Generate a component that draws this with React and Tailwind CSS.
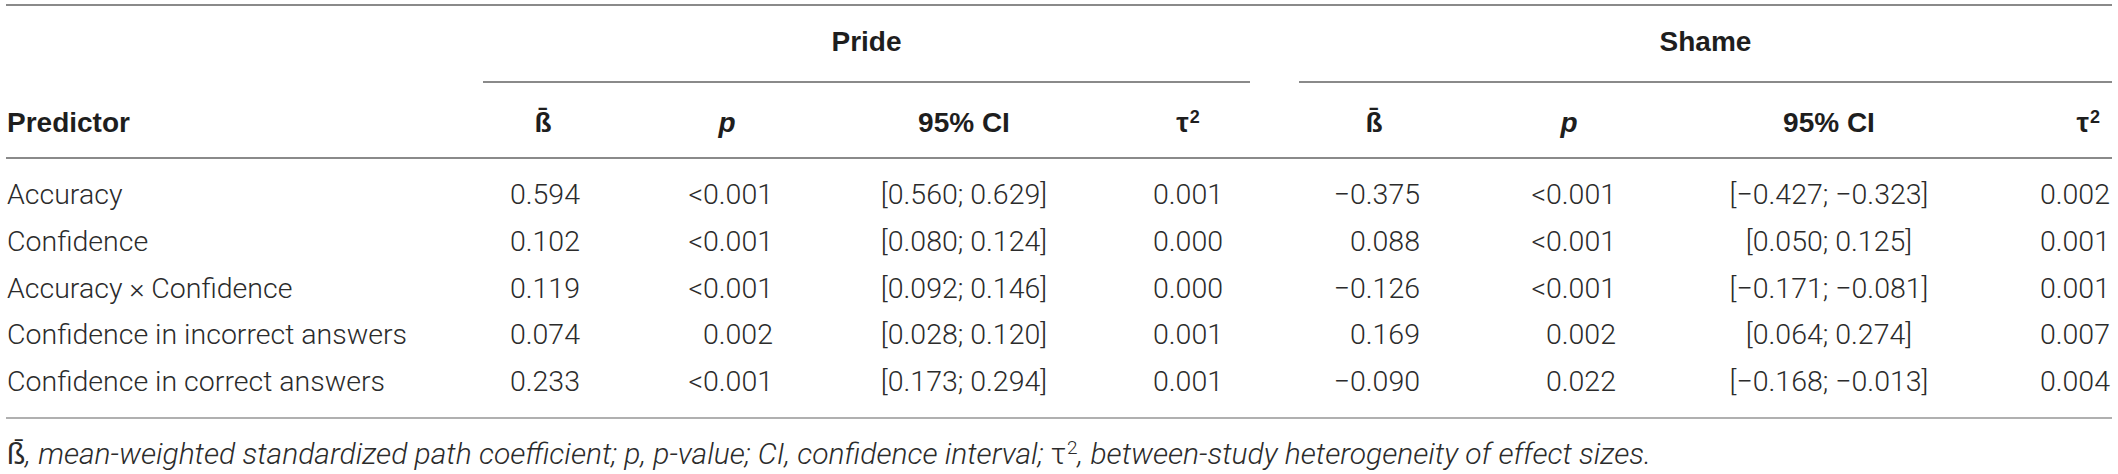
import React from "react";

const GRID =
  "grid grid-cols-[477px_120px_248px_226px_222px_150px_240px_280px_143px]";

const rows = [
  ["Accuracy", "0.594", "<0.001", "[0.560; 0.629]", "0.001", "\u22120.375", "<0.001", "[\u22120.427; \u22120.323]", "0.002"],
  ["Confidence", "0.102", "<0.001", "[0.080; 0.124]", "0.000", "0.088", "<0.001", "[0.050; 0.125]", "0.001"],
  ["Accuracy \u00d7 Confidence", "0.119", "<0.001", "[0.092; 0.146]", "0.000", "\u22120.126", "<0.001", "[\u22120.171; \u22120.081]", "0.001"],
  ["Confidence in incorrect answers", "0.074", "0.002", "[0.028; 0.120]", "0.001", "0.169", "0.002", "[0.064; 0.274]", "0.007"],
  ["Confidence in correct answers", "0.233", "<0.001", "[0.173; 0.294]", "0.001", "\u22120.090", "0.022", "[\u22120.168; \u22120.013]", "0.004"],
];

const cellAlign = [
  "text-left pl-px",
  "text-right pr-[23px]",
  "text-right pr-[78px]",
  "text-center",
  "text-center",
  "text-right pr-[29px]",
  "text-right pr-[73px]",
  "text-center",
  "text-right pr-[2px]",
];

const Beta = () => <span>{"\u00df\u0304"}</span>;
const Tau2 = () => (
  <span>
    {"\u03c4"}
    <sup className="text-[18px] ml-px">2</sup>
  </span>
);

export default function App() {
  return (
    <div className="w-[2118px] h-[474px] overflow-hidden bg-white text-[#2b2b2b]">
      <div className="ml-[6px] w-[2106px] pt-[4px]">
        <div className="border-t-2 border-[#8a8a8a]">
          {/* group header row */}
          <div className={`${GRID} font-['Liberation_Sans',Arial,sans-serif] font-bold text-[28px] leading-[28px] text-[#1e1e1e]`}>
            <div />
            <div className="col-span-4 mr-[49px] border-b-2 border-[#8a8a8a] pt-[22px] pb-[25px] text-center">
              Pride
            </div>
            <div className="col-span-4 border-b-2 border-[#8a8a8a] pt-[22px] pb-[25px] text-center">
              Shame
            </div>
          </div>
          {/* column header row */}
          <div className={`${GRID} border-b-2 border-[#8a8a8a] font-['Liberation_Sans',Arial,sans-serif] font-bold text-[28px] leading-[28px] text-[#1e1e1e] pt-[26px] pb-[20px]`}>
            <div className="pl-px">Predictor</div>
            <div className="text-center"><Beta /></div>
            <div className="text-center italic">p</div>
            <div className="text-center">95% CI</div>
            <div className="text-center"><Tau2 /></div>
            <div className="text-center"><Beta /></div>
            <div className="text-center italic">p</div>
            <div className="text-center">95% CI</div>
            <div className="text-right pr-[12px]"><Tau2 /></div>
          </div>
          {/* body */}
          <div className="pt-[13px] pb-[11px] border-b-2 border-[#b0b0b0] font-['Roboto',sans-serif] font-light text-[28.5px] leading-[46.75px]">
            {rows.map((r, i) => (
              <div key={i} className={GRID}>
                {r.map((c, j) => (
                  <div key={j} className={`${cellAlign[j]} whitespace-nowrap`}>
                    {c}
                  </div>
                ))}
              </div>
            ))}
          </div>
          {/* footnote */}
          <div className="pt-[21px] pl-px font-['Roboto',sans-serif] font-light text-[30px] leading-[28px] whitespace-nowrap">
            <span>{"\u00df\u0304"}</span>
            <span className="italic">, mean-weighted standardized path coefficient; p, p-value; CI, confidence interval; </span>
            <span>{"\u03c4"}<sup className="text-[19px] ml-px">2</sup></span>
            <span className="italic">, between-study heterogeneity of effect sizes.</span>
          </div>
        </div>
      </div>
    </div>
  );
}
